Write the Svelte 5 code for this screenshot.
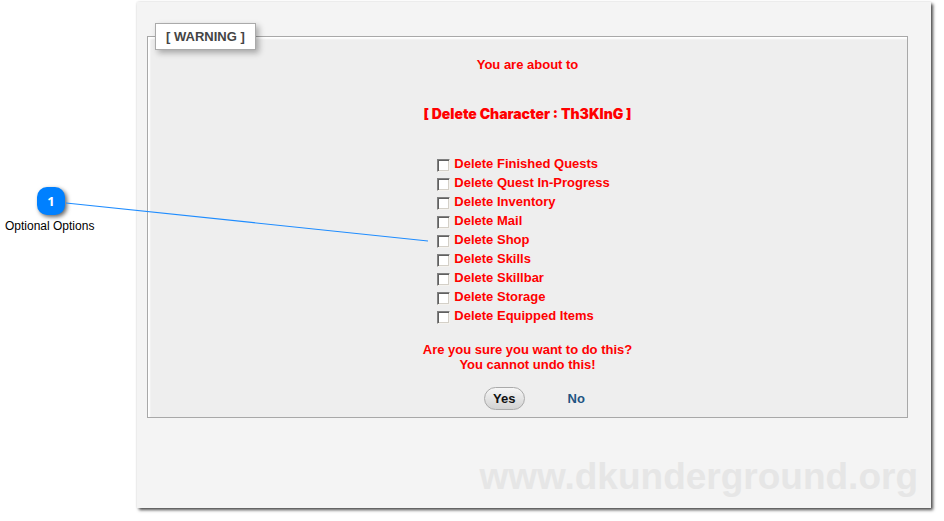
<script>
  const options = $state([
    { id: 'quests', label: 'Delete Finished Quests', checked: false },
    { id: 'progress', label: 'Delete Quest In-Progress', checked: false },
    { id: 'inventory', label: 'Delete Inventory', checked: false },
    { id: 'mail', label: 'Delete Mail', checked: false },
    { id: 'shop', label: 'Delete Shop', checked: false },
    { id: 'skills', label: 'Delete Skills', checked: false },
    { id: 'skillbar', label: 'Delete Skillbar', checked: false },
    { id: 'storage', label: 'Delete Storage', checked: false },
    { id: 'equipped', label: 'Delete Equipped Items', checked: false }
  ]);
</script>

<div class="page">
  <aside class="callout">
    <span class="badge">1</span>
    <span class="note">Optional Options</span>
  </aside>

  <main class="panel">
    <form onsubmit={(e) => e.preventDefault()}>
      <fieldset>
        <legend>[ WARNING ]</legend>
        <p>You are about to</p>
        <h1>[ Delete Character : Th3KInG ]</h1>
        <ul>
          {#each options as option (option.id)}
            <li>
              <input type="checkbox" id={option.id} bind:checked={option.checked} />
              <label for={option.id}>{option.label}</label>
            </li>
          {/each}
        </ul>
        <p>Are you sure you want to do this?<br />You cannot undo this!</p>
        <div class="actions">
          <button type="submit">Yes</button>
          <a href="#no">No</a>
        </div>
      </fieldset>
    </form>
    <div class="watermark">www.dkunderground.org</div>
  </main>

  <svg class="pointer" width="362" height="40" viewBox="0 0 362 40" aria-hidden="true">
    <path d="M0 1L362 39" stroke="#1e8cff" stroke-width="1.2" />
  </svg>
</div>

<style>
  .page {
    position: relative;
    display: flex;
    padding: 2px 13px 12px 0;
    background: #fff;
    font-family: 'Liberation Sans', Arial, sans-serif;
    font-size: 13px;
    line-height: 15px;
  }

  .callout {
    flex: 0 0 137px;
    box-sizing: border-box;
    padding: 185px 0 0 5px;
  }

  .badge {
    display: block;
    width: 28px;
    margin-left: 32px;
    border-radius: 10px;
    background: #0080ff;
    box-shadow: 2px 2px 4px rgba(0, 0, 0, 0.6);
    color: #fff;
    font-family: 'Open Sans', sans-serif;
    font-weight: 700;
    line-height: 28px;
    text-align: center;
  }

  .note {
    display: block;
    margin-top: 4px;
    font-size: 12px;
    color: #000;
  }

  .pointer {
    position: absolute;
    left: 66px;
    top: 202px;
    pointer-events: none;
  }

  .panel {
    flex: 1;
    padding: 21px 10px 9px;
    background: #f4f4f4;
    box-shadow: 0 0 2px rgba(0, 0, 0, 0.12), 2px 2px 3px rgba(0, 0, 0, 0.7);
  }

  form {
    margin-right: 13px;
  }

  fieldset {
    min-width: 0;
    margin: 0;
    padding: 7px;
    border: 1px solid #a8a8a8;
    background: #eee;
    box-shadow: inset 2px 2px 2px #fff;
    color: #f00;
    font-weight: 700;
    text-align: center;
  }

  legend {
    margin: 0 auto 0 0;
    padding: 5px 10px;
    border: 1px solid #aaa;
    background: #fff;
    box-shadow: 3px 3px 6px rgba(0, 0, 0, 0.3);
    color: #444;
  }

  p {
    margin: 0;
  }

  h1 {
    margin: 33px 0 31px;
    font-size: 14px;
    line-height: 18px;
    font-weight: 900;
    font-family: 'Arial Black', Inter, sans-serif;
  }

  ul {
    width: fit-content;
    margin: 0 auto 17px;
    padding: 0 8px 0 0;
    list-style: none;
    text-align: left;
  }

  li {
    display: flex;
    align-items: center;
    gap: 4px;
    height: 19px;
  }

  input {
    appearance: none;
    flex: none;
    width: 13px;
    height: 13px;
    margin: 4px 0 0;
    border: 1px solid;
    border-color: #808080 #f4f2ee #f4f2ee #808080;
    background: #fff;
    box-shadow: inset 1px 1px #606060, inset -1px -1px #d4d0c8;
  }

  input:checked {
    background: #404040;
  }

  .actions {
    display: flex;
    justify-content: center;
    align-items: center;
    gap: 43px;
    margin-top: 15px;
    padding-left: 14px;
  }

  button {
    padding: 3px 8px;
    border: 1px solid #aaa;
    border-radius: 12px;
    background: linear-gradient(#f6f6f6, #d2d2d2);
    color: #111;
    font: inherit;
  }

  a {
    color: #1f5582;
    text-decoration: none;
  }

  .watermark {
    margin: 37px 3px 0 0;
    color: #e6e6e6;
    font-size: 37px;
    line-height: 44px;
    font-weight: 700;
    text-align: right;
  }
</style>
